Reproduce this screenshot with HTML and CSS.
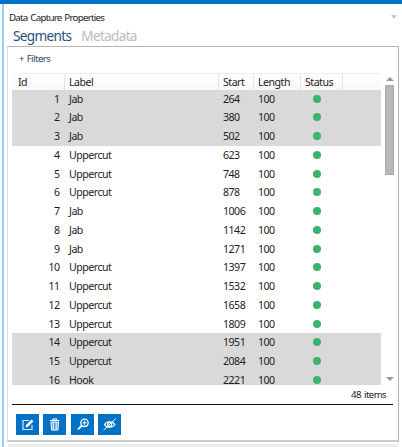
FILE: index.html
```
<!DOCTYPE html>
<html lang="en">
<head>
<meta charset="utf-8">
<title>Data Capture Properties</title>
<link rel="stylesheet" href="styles.css">
</head>
<body>
<div class="window">
  <header class="titlebar"><span class="title">Data Capture Properties</span><span class="menu-arrow"></span></header>
  <nav class="tabs"><span class="tab active">Segments</span><span class="tab meta">Metadata</span></nav>
  <main class="panel">
    <div class="filters">+ Filters</div>
    <div class="list">
      <div class="grid">
        <div class="row head"><span class="id">Id</span><span>Label</span><span>Start</span><span>Length</span><span>Status</span><span></span></div>
        <div class="rows" id="rows"></div>
      </div>
      <div class="scrollbar"><i class="up"></i><i class="thumb"></i><i class="down"></i></div>
    </div>
    <div class="count"><span>48 items</span></div>
    <div class="toolbar">
      <button aria-label="Edit"><svg viewBox="0 0 23 21"><path d="M13 6.500H7v9h9V11" fill="none" stroke="#fff" stroke-opacity=".85" stroke-width="1.200"/><path d="M9.500 13.500l.7-2.700 5.400-5.400 1.900 1.900-5.400 5.400z" fill="#fff"/></svg></button>
      <button aria-label="Delete"><svg viewBox="0 0 23 21"><path d="M7 6.500h9.500M10 6V5h3.500v1" fill="none" stroke="#fff" stroke-width="1.100"/><path d="M8 8h7.500l-.6 8H8.600z" fill="#fff" fill-opacity=".35" stroke="#fff"/><path d="M10.300 8.500v7M13.200 8.500v7" stroke="#fff" stroke-width=".9"/></svg></button>
      <button aria-label="Zoom"><svg viewBox="0 0 23 21"><circle cx="13.500" cy="8.800" r="3.700" fill="none" stroke="#fff" stroke-width="1.300"/><path d="M11.500 8.800h4M13.500 6.800v4" stroke="#fff"/><path d="M10.700 11.600L7 15.300" stroke="#fff" stroke-width="1.900"/></svg></button>
      <button aria-label="Hide"><svg viewBox="0 0 23 21"><path d="M6.500 10.500C8.500 6.800 14.500 6.800 17 10.500 14.500 14.200 8.500 14.200 6.500 10.500z" fill="none" stroke="#fff" stroke-width="1.200"/><circle cx="11.700" cy="10.500" r="2" fill="none" stroke="#fff" stroke-width="1.300"/><path d="M5.500 16.200L17.800 4.500" stroke="#fff" stroke-width="1"/></svg></button>
    </div>
  </main>
  <footer class="footer"></footer>
</div>
<script src="rows.js"></script>
</body>
</html>
```
FILE: styles.css
```
* { box-sizing: border-box; }
body { margin: 0; background: #fff; overflow: hidden; font: 10.6px/18px "Noto Sans", sans-serif; letter-spacing: -.5px; color: #1c1c1c; }
.window { width: 402px; height: 447px; border-top: 4px solid #0072c6; padding-left: 7px; background: linear-gradient(#8fd5fb, #8fd5fb) 2px 0 / 2px 100% no-repeat #fff; }
.titlebar { height: 22px; padding: 5px 5px 0 2px; display: flex; justify-content: space-between; font-size: 9.800px; }
.title { letter-spacing: -.78px; word-spacing: 1px; line-height: 18px; }
.menu-arrow { width: 0; height: 0; margin-top: 6px; border: 3px solid transparent; border-top: 4px solid #bcc8d2; border-bottom: 0; }
.tabs { height: 20px; padding-left: 6px; display: flex; gap: 10px; font-size: 13.600px; line-height: 20px; letter-spacing: -.67px; }
.tab { color: #b9bdc1; }
.meta { letter-spacing: -.7px; }
.active { color: #1f517f; }
.panel { width: 392px; height: 396px; border: 1px solid #b5b5b5; border-left-color: #ddd; border-bottom: 2px solid #ccc; padding-left: 4px; }
.filters { height: 26px; padding: 3px 0 0 7px; font-size: 9.500px; letter-spacing: -.48px; word-spacing: .7px; color: #1f4468; }
.list { height: 312px; display: flex; }
.grid { width: 370px; height: 312px; overflow: hidden; }
.row { display: grid; grid-template-columns: 53px 154px 35px 47px 42px 1fr; height: 18.750px; line-height: 18.500px; }
.row > span { padding-left: 4px; }
.row > .num { text-align: right; padding: 0 5.500px 0 0; }
.selected { background: #d9d9d9; }
.head { height: 16.500px; line-height: 16px; border-top: 1px solid #eee; background: linear-gradient(#fff, #f8f8f8); }
.head > span { border-right: 1px solid #e5e5e5; }
.head > .id { padding-left: 6px; }
.head > span:last-child { border: 0; }
.dot { width: 8px; height: 8px; border-radius: 50%; background: #3cb371; margin: 5px 0 0 12px; }
.scrollbar { width: 17px; display: flex; flex-direction: column; align-items: center; }
.up { border: 4px solid transparent; border-top: 0; border-bottom: 4px solid #999; margin-top: 4px; }
.thumb { width: 9px; height: 90px; background: #b8b8b8; border: 1px solid #aaa; margin-top: 4px; }
.down { border: 4px solid transparent; border-bottom: 0; border-top: 4px solid #999; margin: auto 0 4px; }
.count { width: 381px; height: 20px; border-bottom: 1px solid #111; display: flex; justify-content: flex-end; padding-right: 7px; font-size: 9.600px; letter-spacing: -.6px; word-spacing: 1.300px; line-height: 19px; }
.toolbar { display: flex; gap: 4.400px; padding: 9px 0 0 4px; }
.toolbar button { width: 23px; height: 21px; padding: 0; border: 0; background: #0072c6; }
.toolbar svg { display: block; width: 23px; height: 21px; }
.footer { height: 4px; margin: 2px 4px 0 1px; background: #ededed; }
```
FILE: rows.js
```
const starts = [264, 380, 502, 623, 748, 878, 1006, 1142, 1271, 1397, 1532, 1658, 1809, 1951, 2084, 2221];
const jabs = [1, 2, 3, 7, 8, 9];
document.getElementById('rows').innerHTML = starts.map((start, i) => {
  const id = i + 1;
  const label = id === 16 ? 'Hook' : jabs.includes(id) ? 'Jab' : 'Uppercut';
  const selected = id <= 3 || id >= 14 ? ' selected' : '';
  return `<div class="row${selected}"><span class="num">${id}</span><span>${label}</span><span>${start}</span><span>100</span><i class="dot"></i></div>`;
}).join('');
```
